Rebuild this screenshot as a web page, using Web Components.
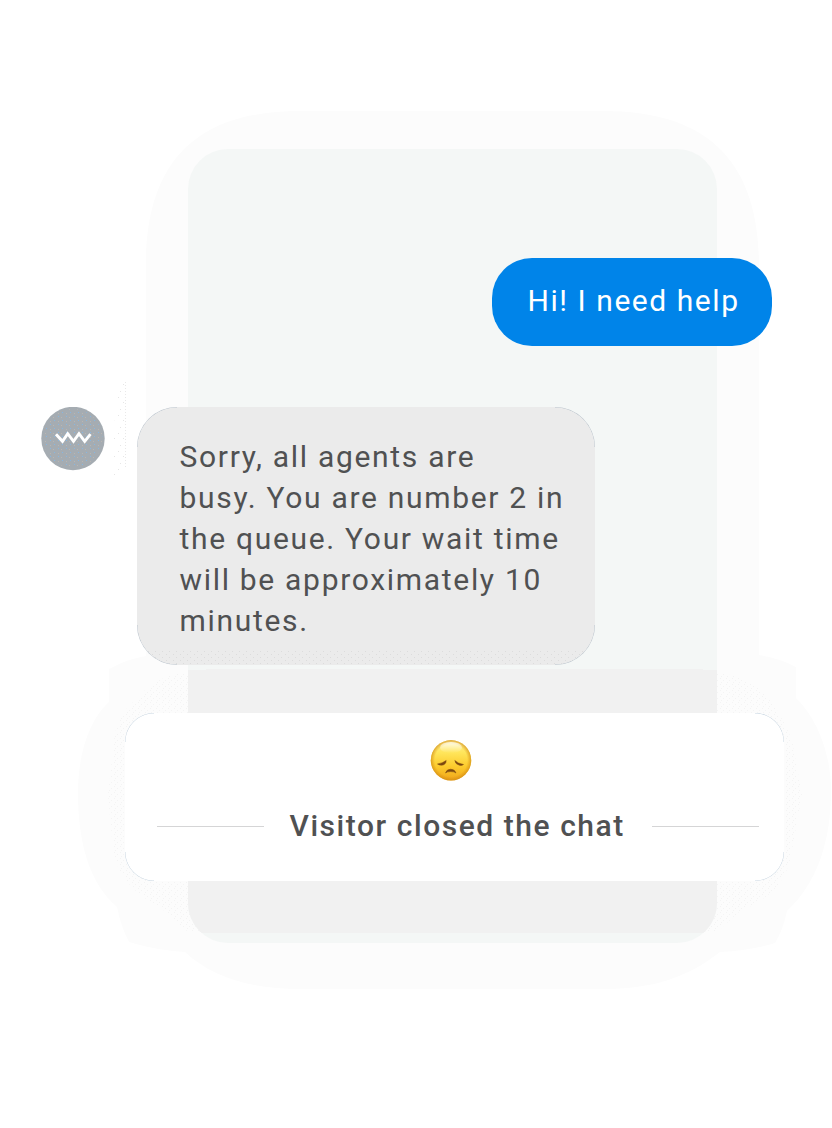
<!DOCTYPE html>
<html lang="en">
<head>
<meta charset="utf-8">
<title>Chat</title>
<style>
html,body{margin:0;background:#fff}
body{font-family:Roboto,"Liberation Sans",sans-serif}
</style>
</head>
<body>
<chat-scene>
  <chat-backdrop slot="backdrop"></chat-backdrop>
  <visitor-bubble>Hi! I need help</visitor-bubble>
  <agent-message>Sorry, all agents are<br>busy. You are number 2 in<br>the queue. Your wait time<br>will be approximately 10<br>minutes.</agent-message>
  <status-card>Visitor closed the chat</status-card>
</chat-scene>
<script>
const define = (name, html) => customElements.define(name, class extends HTMLElement {
  constructor() {
    super();
    const t = document.createElement('template');
    t.innerHTML = html;
    this.attachShadow({mode: 'open'}).append(t.content.cloneNode(true));
  }
});

// Hairline arcs in the four corners of a rounded box of radius r.
const corners = (r, color) => [['left', 'top', r, r], ['right', 'top', 0, r], ['left', 'bottom', r, 0], ['right', 'bottom', 0, 0]]
  .map(([h, v, x, y]) => `radial-gradient(circle at ${x}px ${y}px,transparent ${r - .9}px,${color} ${r - .1}px) ${h} ${v}/${r}px ${r}px no-repeat`).join(',');

define('chat-scene', `
<style>
:host{display:grid;width:832px;height:1128px;overflow:hidden}
.back,.thread{grid-area:1/1;min-width:0}
.thread{display:flex;flex-direction:column;align-items:flex-start;padding-top:258px;z-index:1}
</style>
<div class="back"><slot name="backdrop"></slot></div>
<div class="thread"><slot></slot></div>`);

define('chat-backdrop', `
<style>:host{display:block}svg{display:block}</style>
<svg width="832" height="1128" viewBox="0 0 832 1128">
  <defs>
    <pattern id="dots" width="6" height="6" patternUnits="userSpaceOnUse">
      <path fill="#f4f4f4" d="M0 0h1v1h-1zM3 2h1v1h-1zM1 4h1v1h-1z"/>
    </pattern>
    <pattern id="sparse" width="9" height="18" patternUnits="userSpaceOnUse">
      <path fill="#e6e6e6" d="M1 1h1v1h-1zM6 6h1v1h-1zM3 13h1v1h-1z"/>
    </pattern>
    <clipPath id="panel"><rect x="188" y="149" width="529" height="794" rx="40"/></clipPath>
  </defs>
  <path fill="#fcfcfc" d="M300 111H604C706 111 759 160 759 265V655Q779 658 796 667V698C819 720 831 757 831 790C831 842 817 883 787 911Q783 930 775 943Q750 951 720 952C686 979 649 989 604 989H300C254 989 214 979 185 952Q155 950 129 942Q121 927 117 907C89 883 78 842 78 793C78 753 90 719 109 702V669Q127 659 146 656V265C146 160 198 111 300 111Z"/>
  <path fill="url(#dots)" d="M188 673C166 673 148 685 138 698C120 712 115 725 113 750L108 795L113 850C118 880 140 897 161 908L188 932H717L739 912C772 897 787 882 792 850L802 795L792 740C777 705 760 676 717 673Z"/>
  <path fill="url(#sparse)" d="M126 381V466L122 476L113 481V450L116 400L119 383Z"/>
  <path d="M125.500 382v86" stroke="#e9e9e9" stroke-dasharray="1 2"/>
  <rect x="188" y="149" width="529" height="794" rx="40" fill="#f4f7f6"/>
  <path clip-path="url(#panel)" fill="#f1f1f1" d="M188 670H206V669H703V670H717V933H188z"/>
</svg>`);

define('visitor-bubble', `
<style>
:host{display:block;box-sizing:border-box;width:280px;height:88px;margin-left:492px;padding:22px 0 0 35.500px;border-radius:40px;
background:#0084e9;color:#fff;font-size:30px;line-height:41px;letter-spacing:1.550px;white-space:nowrap}
</style><slot></slot>`);

define('agent-avatar', `
<style>:host{display:block;width:64px;height:64px}svg{display:block}</style>
<svg width="64" height="64" viewBox="0 0 64 64">
  <defs><pattern id="g" width="8" height="8" patternUnits="userSpaceOnUse">
    <path fill="#86b7e2" d="M1 1h1v1h-1zM5 5h1v1h-1z"/><path fill="#bab6b2" d="M4 2h1v1h-1zM1 6h1v1h-1z"/>
  </pattern></defs>
  <circle cx="32" cy="31.500" r="31.700" fill="#a5acb2"/><circle cx="32" cy="31.500" r="29.500" fill="url(#g)"/>
  <path d="M15 27.200L21.500 34.300L26.700 26.700L32.500 34.300L38 26.700L43.700 34.300L49.500 27.200" fill="none" stroke="#fff" stroke-width="2.900"/>
</svg>`);

define('agent-message', `
<style>
:host{display:flex;align-items:flex-start;gap:32px;margin:61px 0 0 41px}
.bubble{box-sizing:border-box;width:458px;height:258px;padding:29px 0 0 42.500px;border-radius:40px;
color:#505152;font-size:30px;line-height:41px;letter-spacing:1.690px;white-space:nowrap;
background:${corners(40, '#b4bec8')},
linear-gradient(#ebebeb 0 0) 0 0/100% 243px no-repeat,
radial-gradient(circle at 1.500px 1.500px,#dcdcdc .6px,transparent .7px) 0 0/7px 6px,
radial-gradient(circle at 1.500px 1.500px,#dcdcdc .6px,transparent .7px) 3px 3px/7px 6px,#ebebeb}
</style>
<agent-avatar></agent-avatar><div class="bubble"><slot></slot></div>`);

define('sad-face', `
<style>:host{display:block;width:42px;height:42px}svg{display:block}</style>
<svg width="42" height="42" viewBox="0 0 42 42">
  <defs>
    <linearGradient id="f" x2="0" y2="1"><stop offset="0" stop-color="#fff09a"/><stop offset=".3" stop-color="#ffe65c"/><stop offset=".65" stop-color="#fccb2d"/><stop offset="1" stop-color="#f0a51a"/></linearGradient>
    <radialGradient id="e"><stop offset=".8" stop-color="#d98d12" stop-opacity="0"/><stop offset="1" stop-color="#cf8b14" stop-opacity=".7"/></radialGradient>
    <linearGradient id="h" x2="0" y2="1"><stop offset="0" stop-color="#fff" stop-opacity=".75"/><stop offset="1" stop-color="#fff" stop-opacity="0"/></linearGradient>
  </defs>
  <circle cx="21" cy="20.300" r="20.200" fill="url(#f)"/><circle cx="21" cy="20.300" r="20.200" fill="url(#e)"/>
  <ellipse cx="21" cy="7.500" rx="11" ry="5.500" fill="url(#h)"/>
  <g fill="#7c4810" stroke="#7c4810" stroke-width=".5" stroke-linejoin="round">
    <path d="M7.500 24Q13 23 16.200 20.500Q16 25 11.500 25.200Q9 25.200 7.500 24ZM24.800 20.500Q28 23.500 33.500 24.500Q32 25.800 29.500 25.300Q25.500 24.500 24.800 20.500Z"/>
    <path d="M15.500 33Q16.500 29.200 20.700 29.200T26 33Q24.500 31.600 20.700 31.600T15.500 33Z"/>
  </g>
</svg>`);

define('status-card', `
<style>
:host{display:flex;flex-direction:column;align-items:center;box-sizing:border-box;width:659px;height:168px;margin:48px 0 0 125px;
padding:27px 25px 0 32px;border-radius:29px;background:${corners(29, '#c8d6e2')},#fff}
sad-face{margin-right:15px}
.row{display:flex;align-items:center;align-self:stretch;margin-top:23px}
i{width:107px;height:1px;background:#d5d5d6;margin-top:2px}
i:last-child{margin-left:auto}
span{margin-left:25.500px;font-size:30px;line-height:41px;font-weight:500;letter-spacing:1.550px;color:#505152;white-space:nowrap}
</style>
<sad-face></sad-face>
<div class="row"><i></i><span><slot></slot></span><i></i></div>`);
</script>
</body>
</html>
